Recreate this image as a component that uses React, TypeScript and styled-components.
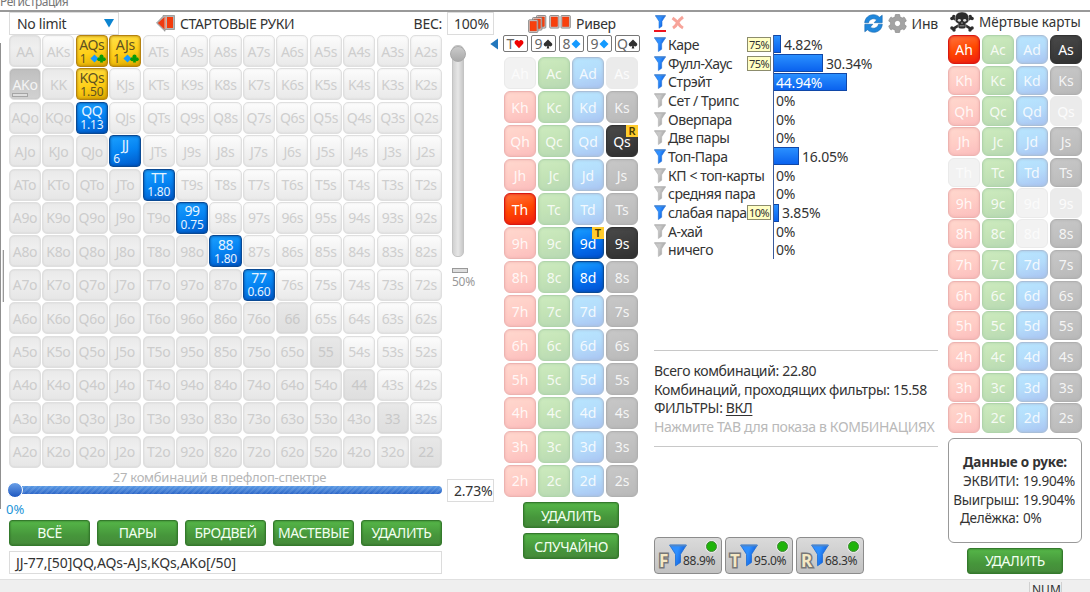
import { Fragment } from 'react';
import styled, { createGlobalStyle, css } from 'styled-components';
import { FaCog } from 'react-icons/fa';

type Suit = 'h' | 'c' | 'd' | 's';
type CardState = 'idle' | 'active' | 'off';

const RANKS = ['A', 'K', 'Q', 'J', 'T', '9', '8', '7', '6', '5', '4', '3', '2'];
const SUITS: Suit[] = ['h', 'c', 'd', 's'];

const SELECTED: Record<string, { tone: 'gold' | 'blue'; value: string; suits?: boolean }> = {
  AQs: { tone: 'gold', value: '1', suits: true },
  AJs: { tone: 'gold', value: '1', suits: true },
  KQs: { tone: 'gold', value: '1.50' },
  QQ: { tone: 'blue', value: '1.13' },
  JJ: { tone: 'blue', value: '6' },
  TT: { tone: 'blue', value: '1.80' },
  '99': { tone: 'blue', value: '0.75' },
  '88': { tone: 'blue', value: '1.80' },
  '77': { tone: 'blue', value: '0.60' },
};

const BOARD: { rank: string; suit: Suit }[] = [
  { rank: 'T', suit: 'h' },
  { rank: '9', suit: 's' },
  { rank: '8', suit: 'd' },
  { rank: '9', suit: 'd' },
  { rank: 'Q', suit: 's' },
];

const RIVER_CARDS: Record<string, CardState> = {
  Ah: 'off',
  As: 'off',
  Qs: 'active',
  Th: 'active',
  '9d': 'active',
  '9s': 'active',
  '8d': 'active',
};

const DEAD_CARDS: Record<string, CardState> = {
  Ah: 'active',
  As: 'active',
  Qs: 'off',
  Th: 'off',
  '9d': 'off',
  '9s': 'off',
  '8d': 'off',
};

const TAGS: Record<string, string> = { Qs: 'R', '9d': 'T' };

const STATS = [
  { name: 'Каре', value: 4.82, on: true, tag: '75%' },
  { name: 'Фулл-Хаус', value: 30.34, on: true, tag: '75%' },
  { name: 'Стрэйт', value: 44.94, on: true },
  { name: 'Сет / Трипс', value: 0 },
  { name: 'Оверпара', value: 0 },
  { name: 'Две пары', value: 0 },
  { name: 'Топ-Пара', value: 16.05, on: true },
  { name: 'КП < топ-карты', value: 0 },
  { name: 'средняя пара', value: 0 },
  { name: 'слабая пара', value: 3.85, on: true, tag: '10%' },
  { name: 'А-хай', value: 0 },
  { name: 'ничего', value: 0 },
];

const STREETS = [
  { name: 'F', value: '88.9%' },
  { name: 'T', value: '95.0%' },
  { name: 'R', value: '68.3%' },
];

const handName = (row: number, col: number) => {
  if (row === col) return RANKS[row] + RANKS[row];
  return row < col ? `${RANKS[row]}${RANKS[col]}s` : `${RANKS[col]}${RANKS[row]}o`;
};

const FunnelIcon = ({ on, size = 12 }: { on?: boolean; size?: number }) => (
  <svg width={size} height={size * 1.25} viewBox="0.8 0.5 12.4 15.5">
    <defs>
      <linearGradient id={on ? 'funnelOn' : 'funnelOff'} x1="0" x2="1" y1="0" y2="0.4">
        <stop offset="0" stopColor={on ? '#2f8cff' : '#c4c4c4'} />
        <stop offset="0.5" stopColor={on ? '#2e90ff' : '#c8c8c8'} />
        <stop offset="1" stopColor={on ? '#0a55d8' : '#9c9c9c'} />
      </linearGradient>
    </defs>
    <path
      d="M1.2 1.2H12.8L8.7 7.6V13.2L5.3 15.5V7.6Z"
      fill={`url(#${on ? 'funnelOn' : 'funnelOff'})`}
      stroke={on ? '#1f6fd6' : '#b0b0b0'}
      strokeWidth="0.6"
    />
    <path d="M1.4 1.6H12.6" stroke={on ? '#4f86c8' : '#b5b5b5'} strokeWidth="1.1" />
  </svg>
);

const SuitIcon = ({ suit, size = 11 }: { suit: Suit; size?: number }) => {
  const shapes = {
    h: <path d="M6 11L1 5.6C-.5 2.8 3.6-.6 6 2.7C8.4-.6 12.5 2.8 11 5.6Z" fill="#f00000" />,
    d: <path d="M6 0.6L11.4 6L6 11.4L0.6 6Z" fill="#149aff" />,
    s: (
      <path
        d="M6 .5L10.6 5.2C12.4 7.5 9 10.3 6.8 8L7.6 11.4H4.4L5.2 8C3 10.3-.4 7.5 1.4 5.2Z"
        fill="#303030"
      />
    ),
    c: (
      <g fill="#089a08">
        <circle cx="6" cy="3.2" r="2.7" />
        <circle cx="3" cy="6.9" r="2.7" />
        <circle cx="9" cy="6.9" r="2.7" />
        <path d="M5 5H7L8 11.4H4Z" />
      </g>
    ),
  };
  return (
    <svg width={size} height={size} viewBox="0 0 12 12">
      {shapes[suit]}
    </svg>
  );
};

const BackCardIcon = () => (
  <svg width="19" height="17" viewBox="0 0 19 17">
    <path d="M0.5 8L7 1.3V0.5H18.5V14.5H9V16.3Z" fill="#b4b4b4" stroke="#858585" strokeWidth="0.7" />
    <path d="M1.8 8L8.5 2V14.5Z" fill="#ee3a12" />
    <path d="M8.8 2H10V13.5H8.8Z" fill="#ff9070" />
    <path d="M11 2H17V13H11Z" fill="#f33b0c" />
  </svg>
);

const StackIcon = () => (
  <svg width="43" height="18" viewBox="0 0 43 18">
    {[
      [8.5, 0.5],
      [4.6, 2.5],
      [0.6, 4.8],
      [21.7, 0.5],
      [33, 0.5],
    ].map(([x, y]) => (
      <g key={`${x}-${y}`} transform={`translate(${x} ${y})`}>
        <rect width="9.3" height="12.6" rx="0.8" fill="#d8d0cc" stroke="#777" strokeWidth="0.8" />
        <rect x="1.4" y="1.5" width="6.5" height="9.6" fill="#f8400c" stroke="#d83010" strokeWidth="0.4" />
      </g>
    ))}
  </svg>
);

const RefreshIcon = () => (
  <svg width="19" height="19" viewBox="0 0 19 19">
    <g fill="#1f87dc" stroke="#1766ac" strokeWidth="0.6" strokeLinejoin="round">
      <path d="M0.7 8.8C1 3.8 4.8 0.7 9.4 0.7C12 0.7 14 1.7 15.5 3.2L18.2 1.2V8.7H10.2L12.6 6C11.5 4.8 8.8 4.1 6.8 5.5C5.3 6.5 4.8 7.5 4.5 8.8Z" />
      <path d="M18.3 10.2C18 15.2 14.2 18.3 9.6 18.3C7 18.3 5 17.3 3.5 15.8L0.8 17.8V10.3H8.8L6.4 13C7.5 14.2 10.2 14.9 12.2 13.5C13.7 12.5 14.2 11.5 14.5 10.2Z" />
    </g>
  </svg>
);

const SkullIcon = () => (
  <svg width="24" height="20" viewBox="0 0 24 20">
    <g stroke="#2c2c2c" strokeWidth="2.6" strokeLinecap="round">
      <path d="M3 6L21 16.8" />
      <path d="M21 6L3 16.8" />
    </g>
    <g fill="#2c2c2c">
      <circle cx="1.9" cy="6.5" r="1.7" />
      <circle cx="3.8" cy="4.5" r="1.7" />
      <circle cx="22.1" cy="6.5" r="1.7" />
      <circle cx="20.2" cy="4.5" r="1.7" />
      <circle cx="1.9" cy="16" r="1.7" />
      <circle cx="4" cy="18" r="1.7" />
      <circle cx="22.1" cy="16" r="1.7" />
      <circle cx="20" cy="18" r="1.7" />
      <path
        d="M12 0C16.8 0 19.2 3 18.7 6.8C18.5 9 18.6 10.2 17 11L15.8 11.6V15.5C15 17.3 9 17.3 8.2 15.5V11.6L7 11C5.4 10.2 5.5 9 5.3 6.8C4.8 3 7.2 0 12 0Z"
        stroke="#fff"
        strokeWidth="0.4"
      />
    </g>
    <g fill="#ddd">
      <ellipse cx="9.3" cy="8.3" rx="1.6" ry="1.4" />
      <ellipse cx="14.7" cy="8.3" rx="1.6" ry="1.4" />
      <path d="M12 10L12.8 11.6H11.2Z" />
      <path d="M9.5 13.6H14.5V14.2H9.5Z" />
    </g>
  </svg>
);

const CardGrid = ({ cards, rowHeight, gap, tags }: {
  cards: Record<string, CardState>;
  rowHeight: number;
  gap: number;
  tags?: Record<string, string>;
}) => (
  <Deck $rowHeight={rowHeight} $gap={gap}>
    {RANKS.map((rank) =>
      SUITS.map((suit) => {
        const name = rank + suit;
        return (
          <Card key={name} $suit={suit} $state={cards[name] ?? 'idle'}>
            {name}
            {tags?.[name] && <CardTag>{tags[name]}</CardTag>}
          </Card>
        );
      }),
    )}
  </Deck>
);

const App = () => {
  return (
    <Page>
      <GlobalStyle />
      <MenuBar>Регистрация</MenuBar>
      <Main>
        <EdgeColumn>
          <EdgeLine />
          <SplitGrip />
        </EdgeColumn>

        <RangePanel>
          <RangeHeader>
            <Select>
              No limit
              <svg width="10" height="9" viewBox="0 0 10 9">
                <path d="M0 0H10L5 8.5Z" fill="#0c84d0" />
              </svg>
            </Select>
            <RangeTitle>
              <BackCardIcon />
              СТАРТОВЫЕ РУКИ
            </RangeTitle>
            <WeightLabel>ВЕС:</WeightLabel>
          </RangeHeader>
          <Matrix>
            {RANKS.map((rank, row) => (
              <Fragment key={rank}>
                {RANKS.map((_, col) => {
                  const name = handName(row, col);
                  const hand = SELECTED[name];
                  if (hand) {
                    return (
                      <SelectedHand key={name} $tone={hand.tone}>
                        <HandName>{name}</HandName>
                        <HandValue $left={name === 'JJ' || hand.suits}>
                          {hand.value}
                          {hand.suits && (
                            <HandSuits>
                              <SuitIcon suit="d" size={9} />
                              <SuitIcon suit="c" size={9} />
                            </HandSuits>
                          )}
                        </HandValue>
                      </SelectedHand>
                    );
                  }
                  const kind = row === col && row > 1 ? 'pair' : row < col ? 'suited' : 'offsuit';
                  return (
                    <Hand key={name} $kind={name === 'AKo' ? 'half' : kind}>
                      {name}
                      {name === 'AKo' && <HalfMark />}
                    </Hand>
                  );
                })}
              </Fragment>
            ))}
          </Matrix>
          <RangeCaption>27 комбинаций в префлоп-спектре</RangeCaption>
          <RangeSlider>
            <RangeThumb />
          </RangeSlider>
          <RangeStart>0%</RangeStart>
          <ButtonRow>
            <Button>ВСЁ</Button>
            <Button>ПАРЫ</Button>
            <Button>БРОДВЕЙ</Button>
            <Button>МАСТЕВЫЕ</Button>
            <Button>УДАЛИТЬ</Button>
          </ButtonRow>
          <RangeInput>JJ-77,[50]QQ,AQs-AJs,KQs,AKo[/50]</RangeInput>
        </RangePanel>

        <WeightPanel>
          <ValueBox>100%</ValueBox>
          <WeightTrack>
            <WeightThumb />
          </WeightTrack>
          <WeightPreset>
            <WeightMark />
            50%
          </WeightPreset>
          <ValueBox>2.73%</ValueBox>
        </WeightPanel>

        <RiverPanel>
          <CollapseArrow width="8" height="12" viewBox="0 0 8 12">
            <path d="M8 0.5V11.5L0.3 6Z" fill="#2377bd" />
          </CollapseArrow>
          <RiverTitle>
            <StackIcon />
            Ривер
          </RiverTitle>
          <Board>
            {BOARD.map(({ rank, suit }) => (
              <BoardCard key={rank + suit}>
                {rank}
                <SuitIcon suit={suit} size={10} />
              </BoardCard>
            ))}
          </Board>
          <CardGrid cards={RIVER_CARDS} rowHeight={32.3} gap={1.7} tags={TAGS} />
          <RiverActions>
            <Button>УДАЛИТЬ</Button>
            <Button>СЛУЧАЙНО</Button>
          </RiverActions>
        </RiverPanel>

        <StatsPanel>
          <StatsToolbar>
            <FilterToggle>
              <FunnelIcon on size={11} />
            </FilterToggle>
            <ClearIcon width="14" height="15" viewBox="0 0 14 14">
              <path
                d="M1.5 2.5Q5 5 7 7.5Q9 11 12 12.5M12 1.5Q8.5 4 6.5 7.5Q5 10.5 2 12.5"
                fill="none"
                stroke="#f7a49a"
                strokeWidth="3"
              />
            </ClearIcon>
            <ToolbarSpace />
            <RefreshIcon />
            <FaCog size={19} color="#a3a3a3" stroke="#808080" strokeWidth={14} />
            Инв
          </StatsToolbar>
          <StatList>
            {STATS.map(({ name, value, on, tag }) => (
              <StatRow key={name}>
                <FunnelIcon on={on} />
                <StatName>{name}</StatName>
                {tag && <StatTag>{tag}</StatTag>}
                <StatAxis>
                  {value > 0 && (
                    <StatBar style={{ width: Math.round(value * 1.64) - 1 }}>{value > 40 && `${value}%`}</StatBar>
                  )}
                  {value <= 40 && <StatValue $zero={value === 0}>{value}%</StatValue>}
                </StatAxis>
              </StatRow>
            ))}
          </StatList>
          <Summary>
            <div>Всего комбинаций: 22.80</div>
            <div>Комбинаций, проходящих фильтры: 15.58</div>
            <div>
              ФИЛЬТРЫ: <u>ВКЛ</u>
            </div>
            <SummaryHint>Нажмите TAB для показа в КОМБИНАЦИЯХ</SummaryHint>
          </Summary>
          <Streets>
            {STREETS.map(({ name, value }) => (
              <Street key={name}>
                <StreetName>{name}</StreetName>
                <FunnelIcon on size={18} />
                <StreetValue>{value}</StreetValue>
                <StreetLamp />
              </Street>
            ))}
          </Streets>
        </StatsPanel>

        <DeadPanel>
          <DeadTitle>
            <SkullIcon />
            Мёртвые карты
          </DeadTitle>
          <CardGrid cards={DEAD_CARDS} rowHeight={29.3} gap={1.4} />
          <HandInfo>
            <HandInfoTitle>Данные о руке:</HandInfoTitle>
            <span>ЭКВИТИ:</span>
            <span>19.904%</span>
            <span>Выигрыш:</span>
            <span>19.904%</span>
            <span>Делёжка:</span>
            <span>0%</span>
          </HandInfo>
          <DeadAction>
            <Button>УДАЛИТЬ</Button>
          </DeadAction>
        </DeadPanel>
      </Main>
      <StatusBar>
        <StatusCell>NUM</StatusCell>
      </StatusBar>
    </Page>
  );
};

export default App;

const GlobalStyle = createGlobalStyle`
  * {
    box-sizing: border-box;
  }
  body {
    margin: 0;
    overflow: hidden;
    background: #fff;
    color: #333;
    font-family: 'Noto Sans', 'Open Sans', sans-serif;
    font-size: 14px;
    white-space: nowrap;
  }
  svg {
    display: block;
    flex: none;
  }
`;

const Page = styled.div`
  display: flex;
  flex-direction: column;
  width: 1090px;
  height: 592px;
  overflow: hidden;
`;

const MenuBar = styled.div`
  display: flex;
  align-items: flex-end;
  height: 12px;
  border-bottom: 2px solid #999;
  color: #777;
  font-size: 12px;
  letter-spacing: -0.5px;
  line-height: 16px;
`;

const Main = styled.div`
  display: flex;
  height: 567px;
`;

const EdgeColumn = styled.div`
  display: flex;
  flex: none;
  width: 9px;
`;

const EdgeLine = styled.div`
  width: 1px;
  height: 466px;
  margin-top: 31px;
  background: #909090;
`;

const SplitGrip = styled.div`
  width: 2px;
  height: 52px;
  margin: 238px 0 0 1px;
  border-right: 1px solid #999;
  background: #e0e0e0;
`;

const RangePanel = styled.div`
  display: flex;
  flex: none;
  flex-direction: column;
  width: 433px;
`;

const RangeHeader = styled.div`
  display: flex;
  align-items: center;
  height: 23px;
`;

const Select = styled.div`
  display: flex;
  align-items: center;
  justify-content: space-between;
  width: 110px;
  height: 23px;
  padding: 0 4px 0 7px;
  border: 1px solid #dcdcdc;
  letter-spacing: -0.3px;
`;

const RangeTitle = styled.div`
  display: flex;
  align-items: center;
  gap: 5px;
  margin-left: 37px;
  letter-spacing: -0.4px;
`;

const WeightLabel = styled.div`
  margin-left: auto;
  letter-spacing: -0.3px;
`;

const Matrix = styled.div`
  display: grid;
  grid-template-columns: repeat(13, 1fr);
  grid-auto-rows: 32px;
  gap: 1.4px;
`;

const handKinds = {
  suited: 'background: linear-gradient(#fcfcfc, #e9e9e9); color: #cecece;',
  offsuit: 'background: linear-gradient(#e9e9e9, #efefef 40%, #e6e6e6); color: #ccc;',
  pair: 'background: linear-gradient(#e8e8e8, #dedede); color: #c8c8c8;',
  half: 'background: linear-gradient(#bfbfbf, #d2d2d2); color: #f4f4f4;',
};

const Hand = styled.div<{ $kind: keyof typeof handKinds }>`
  position: relative;
  display: flex;
  align-items: center;
  justify-content: center;
  border: 1px solid #dfdfdf;
  border-radius: 5px;
  font-size: 14px;
  letter-spacing: -0.3px;
  box-shadow: inset 0 0 2px rgba(0, 0, 0, 0.1);
  ${({ $kind }) => handKinds[$kind]}
`;

const HalfMark = styled.div`
  position: absolute;
  bottom: 2px;
  left: 2px;
  width: 16px;
  height: 4px;
  border: 1px solid #a5a5a5;
  background: #ddd;
`;

const SelectedHand = styled.div<{ $tone: 'gold' | 'blue' }>`
  display: flex;
  flex-direction: column;
  align-items: center;
  justify-content: center;
  border: 1px solid;
  border-radius: 4px;
  ${({ $tone }) =>
    $tone === 'gold'
      ? css`
          border-color: #b58210;
          background: linear-gradient(165deg, #ffe14a, #ffce16 55%, #dca800);
          color: #5f5220;
          box-shadow: inset 0 0 3px #a87800;
        `
      : css`
          border-color: #0a4a94;
          background: linear-gradient(165deg, #1ba1ff, #0583f2 50%, #0058c8);
          color: #e6f3ff;
          box-shadow: inset 0 0 3px #00408f;
        `}
`;

const HandName = styled.div`
  font-size: 14px;
  letter-spacing: -0.4px;
  line-height: 14px;
`;

const HandValue = styled.div<{ $left?: boolean }>`
  display: flex;
  align-items: center;
  align-self: ${({ $left }) => ($left ? 'stretch' : 'center')};
  padding-left: ${({ $left }) => ($left ? '3px' : 0)};
  font-size: 12px;
  letter-spacing: -0.2px;
  line-height: 13px;
`;

const HandSuits = styled.span`
  display: flex;
  margin-left: 3px;
  svg + svg {
    margin-left: -2px;
  }
`;

const RangeCaption = styled.div`
  height: 18px;
  padding-right: 12px;
  color: #b5b5b5;
  font-size: 13px;
  letter-spacing: -0.25px;
  line-height: 19px;
  text-align: center;
`;

const RangeSlider = styled.div`
  display: flex;
  align-items: center;
  height: 8px;
  border-radius: 4px;
  background: repeating-linear-gradient(135deg, transparent 0 2px, rgba(255, 255, 255, 0.1) 2px 4px),
    linear-gradient(#5a9ae4, #2f68c8);
`;

const RangeThumb = styled.div`
  flex: none;
  width: 16px;
  height: 16px;
  margin-left: -2px;
  border: 1px solid #fff;
  border-radius: 50%;
  background: linear-gradient(#6aa0e8, #1e58c0);
`;

const RangeStart = styled.div`
  height: 26px;
  margin-left: -3px;
  padding-top: 6px;
  color: #1c95d8;
  font-size: 13px;
  line-height: 18px;
`;

const ButtonRow = styled.div`
  display: grid;
  grid-template-columns: repeat(5, 81px);
  gap: 7px;
`;

const Button = styled.button`
  width: 100%;
  height: 26px;
  padding: 0;
  border: 1px solid #347a2c;
  border-radius: 3px;
  background: linear-gradient(#55b648, #46963b 60%, #458a3a);
  box-shadow: inset 0 0 2px #2c6424;
  color: #f2fff0;
  font: inherit;
  font-size: 14px;
  letter-spacing: -0.45px;
`;

const RangeInput = styled.div`
  height: 23px;
  margin-top: 5px;
  padding-left: 6px;
  border: 1px solid #dcdcdc;
  line-height: 21px;
  letter-spacing: -0.1px;
`;

const WeightPanel = styled.div`
  display: flex;
  flex: none;
  flex-direction: column;
  width: 47px;
  margin-left: 5px;
`;

const ValueBox = styled.div`
  height: 23px;
  padding-left: 6px;
  overflow: hidden;
  border: 1px solid #dcdcdc;
  line-height: 21px;
  letter-spacing: -0.2px;
`;

const WeightTrack = styled.div`
  width: 12px;
  height: 212px;
  margin: 10px 0 11px 5px;
  border: 1px solid #c4c4c4;
  border-radius: 5px;
  background: linear-gradient(90deg, #d0d0d0, #e6e6e6 50%, #c8c8c8);
`;

const WeightThumb = styled.div`
  width: 16px;
  height: 16px;
  margin-left: -3px;
  border: 1px solid #aaa;
  border-radius: 50%;
  background: linear-gradient(#cacaca, #aaa);
`;

const WeightPreset = styled.div`
  height: 211px;
  padding-left: 5px;
  color: #999;
  font-size: 12px;
  letter-spacing: -0.3px;
  line-height: 17px;
`;

const WeightMark = styled.div`
  width: 16px;
  height: 5px;
  border: 1px solid #999;
  background: #ddd;
`;

const RiverPanel = styled.div`
  position: relative;
  flex: none;
  width: 135px;
  margin-left: 10px;
`;

const CollapseArrow = styled.svg`
  position: absolute;
  top: 26px;
  left: -14px;
`;

const RiverTitle = styled.div`
  display: flex;
  align-items: center;
  gap: 5px;
  height: 23px;
  padding-left: 24px;
  letter-spacing: -0.3px;
`;

const Board = styled.div`
  display: flex;
  gap: 3px;
  width: 138px;
  margin: 0 0 5px -1px;
`;

const BoardCard = styled.div`
  display: flex;
  align-items: center;
  justify-content: center;
  width: 25px;
  height: 17px;
  border: 1px solid #777;
  border-radius: 2px;
  color: #666;
  font-size: 14px;
`;

const Deck = styled.div<{ $rowHeight: number; $gap: number }>`
  display: grid;
  grid-template-columns: repeat(4, 32px);
  grid-auto-rows: ${({ $rowHeight }) => $rowHeight}px;
  gap: ${({ $gap }) => $gap}px 2px;
`;

const cardTones: Record<Suit, { active: string; idle: string; border: string; edge: string }> = {
  h: {
    active: 'linear-gradient(165deg, #ff7440, #ff4800 50%, #f01c10)',
    idle: 'linear-gradient(165deg, #ffd8ce, #ffcdc6 50%, #fbbdbd)',
    border: '#edb3b0',
    edge: '#d81810',
  },
  c: {
    active: 'linear-gradient(#55b648, #458a3a)',
    idle: 'linear-gradient(165deg, #cdebbf, #c3e3b6 50%, #b8d8b4)',
    border: '#b0d4ab',
    edge: '#347a2c',
  },
  d: {
    active: 'linear-gradient(165deg, #1ba1ff, #0573f2 50%, #0050d0)',
    idle: 'linear-gradient(165deg, #b8e6ff, #b4dcfb 50%, #a9c4f2)',
    border: '#a9bfd8',
    edge: '#0a4a94',
  },
  s: {
    active: 'linear-gradient(165deg, #4a4a4a, #303030)',
    idle: 'linear-gradient(165deg, #c8c8c8, #b9b9b9)',
    border: '#b0b0b0',
    edge: '#333',
  },
};

const Card = styled.div<{ $suit: Suit; $state: CardState }>`
  position: relative;
  display: flex;
  align-items: center;
  justify-content: center;
  border: 1px solid;
  border-radius: 6px;
  font-size: 14px;
  ${({ $suit, $state }) => {
    const tone = cardTones[$suit];
    if ($state === 'off') {
      return css`
        border-color: #eaeaea;
        background: ${$suit === 's' ? '#ebebeb' : '#f2f2f2'};
        color: #fbfbfb;
      `;
    }
    return css`
      border-color: ${$state === 'active' ? tone.edge : tone.border};
      background: ${tone[$state]};
      box-shadow: inset 0 0 3px ${$state === 'active' ? tone.edge : tone.border};
      color: ${$state === 'active' ? '#fff' : 'rgba(255, 255, 255, 0.85)'};
    `;
  }}
`;

const CardTag = styled.div`
  position: absolute;
  top: -1px;
  right: -1px;
  width: 12px;
  height: 12px;
  background: #ffcb2c;
  color: #4a3a00;
  font-size: 11px;
  font-weight: 600;
  line-height: 12px;
  text-align: center;
`;

const RiverActions = styled.div`
  display: grid;
  gap: 5px;
  width: 96px;
  margin: 5px 0 0 19px;
`;

const StatsPanel = styled.div`
  display: flex;
  flex: none;
  flex-direction: column;
  width: 284px;
  margin-left: 15px;
`;

const StatsToolbar = styled.div`
  display: flex;
  align-items: center;
  gap: 5px;
  height: 23px;
  letter-spacing: -0.2px;
`;

const FilterToggle = styled.div`
  display: flex;
  justify-content: center;
  width: 12px;
  padding-bottom: 1px;
  border-bottom: 2px solid #f0141e;
`;

const ClearIcon = styled.svg`
  margin-bottom: 3px;
`;

const ToolbarSpace = styled.div`
  flex: 1;
`;

const StatList = styled.div`
  display: grid;
  grid-auto-rows: 18.7px;
  height: 315px;
  align-content: start;
`;

const StatRow = styled.div`
  display: flex;
  align-items: center;
`;

const StatName = styled.div`
  flex: 1;
  width: 0;
  margin-left: 2px;
  letter-spacing: -0.42px;
`;

const StatTag = styled.div`
  width: 24px;
  height: 15px;
  margin-right: 2px;
  border: 1px solid #8c8c6c;
  background: #ffffc4;
  font-size: 11px;
  letter-spacing: -0.5px;
  line-height: 13px;
  text-align: center;
`;

const StatAxis = styled.div`
  display: flex;
  align-items: center;
  width: 165px;
  height: 100%;
  border-left: 1px solid #3a5a9a;
`;

const StatBar = styled.div`
  height: 18px;
  padding-left: 2px;
  border: 1px solid #1048a8;
  border-left: 0;
  background: linear-gradient(#2a90ff, #0a62ee);
  color: #fff;
  line-height: 17px;
  letter-spacing: -0.2px;
`;

const StatValue = styled.div<{ $zero: boolean }>`
  margin-left: ${({ $zero }) => ($zero ? 2 : 3)}px;
  letter-spacing: -0.2px;
`;

const Summary = styled.div`
  height: 97px;
  padding-top: 11px;
  border: solid #c8c8c8;
  border-width: 1px 0;
  line-height: 18.7px;
  letter-spacing: -0.35px;
  u {
    text-underline-offset: 2px;
  }
`;

const SummaryHint = styled.div`
  color: #b9b9b9;
`;

const Streets = styled.div`
  display: flex;
  gap: 3px;
  margin-top: 90px;
`;

const Street = styled.div`
  position: relative;
  display: flex;
  align-items: center;
  width: 68px;
  height: 37px;
  padding-left: 4px;
  border: 1px solid #8c8c8c;
  border-radius: 4px;
  background: linear-gradient(#dadada, #c2c2c2);
`;

const StreetName = styled.div`
  align-self: flex-end;
  width: 10px;
  color: #f4e8c4;
  font-size: 17px;
  font-weight: 700;
  line-height: 24px;
  -webkit-text-stroke: 3px #777;
  paint-order: stroke fill;
`;

const StreetValue = styled.div`
  align-self: flex-end;
  margin: 0 0 3px -4px;
  font-size: 12px;
  letter-spacing: -0.3px;
  line-height: 18px;
`;

const StreetLamp = styled.div`
  position: absolute;
  top: 3px;
  right: 4px;
  width: 11px;
  height: 11px;
  border: 1px solid #3f8a34;
  border-radius: 50%;
  background: #1fb40a;
  box-shadow: 0 0 0 1px #e8e8e8;
`;

const DeadPanel = styled.div`
  flex: none;
  width: 135px;
  margin-left: 10px;
`;

const DeadTitle = styled.div`
  display: flex;
  align-items: center;
  gap: 5px;
  height: 23px;
  padding: 0 0 3px 2px;
  font-size: 13.5px;
`;

const HandInfo = styled.div`
  display: grid;
  grid-template-columns: 70px 1fr;
  grid-auto-rows: 18.7px;
  align-content: center;
  column-gap: 4px;
  width: 134px;
  height: 105px;
  margin-top: 5px;
  padding-top: 1px;
  border: 1px solid #999;
  border-radius: 6px;
  font-size: 13.5px;
  line-height: 18px;
  letter-spacing: -0.2px;
  span:nth-of-type(odd) {
    text-align: right;
  }
`;

const HandInfoTitle = styled.div`
  grid-column: 1 / -1;
  font-weight: 700;
  text-align: center;
`;

const DeadAction = styled.div`
  width: 96px;
  margin: 5px 0 0 19px;
`;

const StatusBar = styled.div`
  display: flex;
  height: 13px;
  border-top: 1px solid #e0e0e0;
  background: #efefef;
`;

const StatusCell = styled.div`
  width: 33px;
  margin: 2px 0 0 1029px;
  padding-left: 2px;
  border: solid #d0d0d0;
  border-width: 0 1px;
  font-size: 12px;
  line-height: 15px;
`;
